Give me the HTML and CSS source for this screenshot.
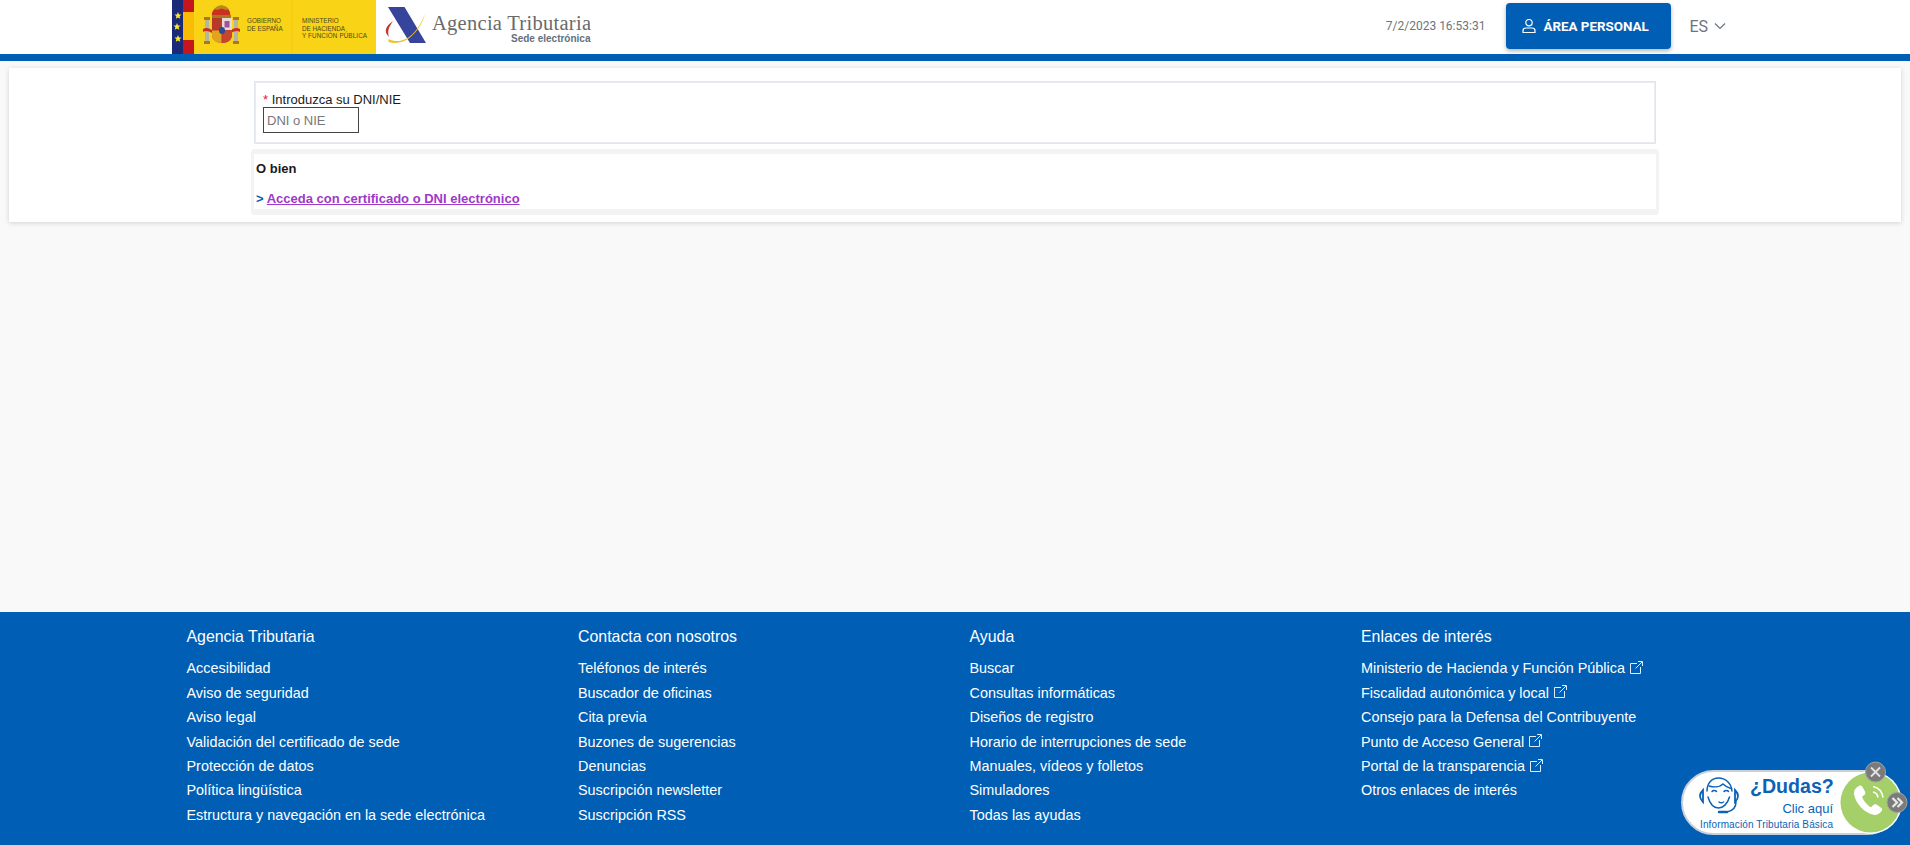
FILE: index.html
```html
<!DOCTYPE html>
<html lang="es">
<head>
<meta charset="utf-8">
<title>Agencia Tributaria: Sede electrónica</title>
<link rel="stylesheet" href="styles.css">
</head>
<body>
<header class="site-header">
  <svg class="logo-gov" viewBox="172 0 204 54" width="204" height="54" role="img" aria-label="Gobierno de España">
    <rect x="172" y="0" width="204" height="54" fill="#f8d316"/>
    <rect x="172" y="0" width="11" height="54" fill="#1a2a78"/>
    <rect x="183" y="0" width="11" height="54" fill="#c4161c"/>
    <rect x="183" y="12" width="11" height="28" fill="#fbbc04"/>
    <rect x="291.500" y="0" width="1" height="54" fill="#f3c912"/>
    <g fill="#fde92c">
      <path d="M178 12l1 2.400 2.500.2-1.900 1.600.6 2.500-2.200-1.300-2.200 1.300.6-2.500-1.900-1.600 2.500-.2z"/>
      <path d="M177 23l1 2.400 2.500.2-1.900 1.600.6 2.500-2.200-1.300-2.200 1.300.6-2.500-1.900-1.600 2.500-.2z"/>
      <path d="M178 35l1 2.400 2.500.2-1.900 1.600.6 2.500-2.200-1.300-2.200 1.300.6-2.500-1.900-1.600 2.500-.2z"/>
    </g>
    <g>
      <path d="M212 16c-1-5 3-9 9.500-9.500C228 7 231 11 230 16z" fill="#c9301f"/>
      <path d="M214 9l3-2.500 4.500-1.500 4.500 1.500 3 2.500-3 1-4.500-1.500-4.500 1.500z" fill="#b9891a"/>
      <rect x="212" y="15" width="19" height="3" fill="#a9781a"/>
      <rect x="204" y="17" width="6" height="3" fill="#a9781a"/>
      <rect x="233" y="17" width="6" height="3" fill="#a9781a"/>
      <rect x="205" y="20" width="4" height="21" fill="#b5b5a5"/>
      <rect x="234" y="20" width="4" height="21" fill="#b5b5a5"/>
      <rect x="204" y="41" width="6" height="3" fill="#a9781a"/>
      <rect x="233" y="41" width="6" height="3" fill="#a9781a"/>
      <path d="M203 29c3-2 6-1 9 1v3c-3-1.500-6-3-9-1zM240 29c-3-2-6-1-9 1v3c3-1.500 6-3 9-1z" fill="#c9301f"/>
      <path d="M212 18h20v17c0 5-5 8-10 8s-10-3-10-8z" fill="#b8392a"/>
      <rect x="222" y="18" width="10" height="12" fill="#e6d9d8"/>
      <path d="M224.500 21h5v6.500h-5z" fill="#a0529a"/>
      <path d="M212 30.500h9.500V43c-5 0-9.500-3-9.500-8z" fill="#e0a420"/>
      <path d="M222.500 30.500h9.500v4.500c0 5-4.500 8-9.500 8z" fill="#c8452c"/>
      <ellipse cx="222" cy="30.500" rx="3" ry="3.500" fill="#2b4b92"/>
    </g>
    <g class="gov-text">
      <text x="247" y="23">GOBIERNO</text>
      <text x="247" y="30.500">DE ESPAÑA</text>
      <text x="302" y="23">MINISTERIO</text>
      <text x="302" y="30.500">DE HACIENDA</text>
      <text x="302" y="38" textLength="65">Y FUNCIÓN PÚBLICA</text>
    </g>
  </svg>
  <svg class="logo-at" viewBox="380 0 220 54" width="220" height="54" role="img" aria-label="Agencia Tributaria">
    <path d="M388 7h16.500L426 43h-16z" fill="#36449b"/>
    <path d="M388.500 39c11 5.500 26 1 36.500-25-5 18-20 33-36.500 28z" fill="#f0bf2e"/>
    <path d="M393 21c-7 5-10 10-4 16-2-6 0-10 4-16z" fill="#c5352b"/>
    <text class="at-title" x="432" y="29.500" textLength="159">Agencia Tributaria</text>
    <text class="at-sub" x="511" y="42">Sede electrónica</text>
  </svg>
  <div class="header-right">
    <span class="clock">7/2/2023 16:53:31</span>
    <a class="btn-personal" href="#">
      <svg class="btn-icon" viewBox="0 0 16 16" width="16" height="16" fill="none" stroke="#fff" stroke-width="1.200">
        <circle cx="8" cy="4.700" r="3.200"/>
        <path d="M2 14.500v-1.800c0-1.800 1.500-2.700 3-2.700h6c1.500 0 3 .9 3 2.700v1.800z"/>
      </svg>
      <span>ÁREA PERSONAL</span>
    </a>
    <a class="lang" href="#">
      <span>ES</span>
      <svg viewBox="0 0 12 8" width="12" height="8" fill="none" stroke="#6c757d" stroke-width="1.200"><path d="M1 1.500l5 5 5-5"/></svg>
    </a>
  </div>
</header>

<main class="site-main">
  <section class="card">
    <div class="field-box">
      <label class="field-label" for="dni"><span class="req">*</span> Introduzca su DNI/NIE</label>
      <input class="field-input" id="dni" type="text" placeholder="DNI o NIE">
    </div>
    <div class="alt-box">
      <div class="alt-inner">
        <p class="alt-title">O bien</p>
        <p class="alt-link"><span class="alt-mark">&gt;</span> <a href="#">Acceda con certificado o DNI electrónico</a></p>
      </div>
    </div>
  </section>
</main>

<footer class="site-footer">
  <div class="footer-grid">
    <nav class="footer-col">
      <h2>Agencia Tributaria</h2>
      <ul>
        <li><a href="#">Accesibilidad</a></li>
        <li><a href="#">Aviso de seguridad</a></li>
        <li><a href="#">Aviso legal</a></li>
        <li><a href="#">Validación del certificado de sede</a></li>
        <li><a href="#">Protección de datos</a></li>
        <li><a href="#">Política lingüística</a></li>
        <li><a href="#">Estructura y navegación en la sede electrónica</a></li>
      </ul>
    </nav>
    <nav class="footer-col">
      <h2>Contacta con nosotros</h2>
      <ul>
        <li><a href="#">Teléfonos de interés</a></li>
        <li><a href="#">Buscador de oficinas</a></li>
        <li><a href="#">Cita previa</a></li>
        <li><a href="#">Buzones de sugerencias</a></li>
        <li><a href="#">Denuncias</a></li>
        <li><a href="#">Suscripción newsletter</a></li>
        <li><a href="#">Suscripción RSS</a></li>
      </ul>
    </nav>
    <nav class="footer-col">
      <h2>Ayuda</h2>
      <ul>
        <li><a href="#">Buscar</a></li>
        <li><a href="#">Consultas informáticas</a></li>
        <li><a href="#">Diseños de registro</a></li>
        <li><a href="#">Horario de interrupciones de sede</a></li>
        <li><a href="#">Manuales, vídeos y folletos</a></li>
        <li><a href="#">Simuladores</a></li>
        <li><a href="#">Todas las ayudas</a></li>
      </ul>
    </nav>
    <nav class="footer-col">
      <h2>Enlaces de interés</h2>
      <ul>
        <li><a class="ext" href="#">Ministerio de Hacienda y Función Pública <svg class="ext-icon" viewBox="0 0 13 13" width="13" height="13"><path d="M7 2.500H.5v10h10V6M5.500 7.500L12 1M8 .5h4.500V5"/></svg></a></li>
        <li><a class="ext" href="#">Fiscalidad autonómica y local <svg class="ext-icon" viewBox="0 0 13 13" width="13" height="13"><path d="M7 2.500H.5v10h10V6M5.500 7.500L12 1M8 .5h4.500V5"/></svg></a></li>
        <li><a href="#">Consejo para la Defensa del Contribuyente</a></li>
        <li><a class="ext" href="#">Punto de Acceso General <svg class="ext-icon" viewBox="0 0 13 13" width="13" height="13"><path d="M7 2.500H.5v10h10V6M5.500 7.500L12 1M8 .5h4.500V5"/></svg></a></li>
        <li><a class="ext" href="#">Portal de la transparencia <svg class="ext-icon" viewBox="0 0 13 13" width="13" height="13"><path d="M7 2.500H.5v10h10V6M5.500 7.500L12 1M8 .5h4.500V5"/></svg></a></li>
        <li><a href="#">Otros enlaces de interés</a></li>
      </ul>
    </nav>
  </div>
</footer>

<svg class="help-widget" viewBox="1670 755 240 90" width="240" height="90" role="img" aria-label="Información Tributaria Básica">
  <rect x="1682" y="771" width="216" height="63" rx="31.500" fill="#fff" stroke="#c9d0da" stroke-width="2"/>
  <g fill="none" stroke="#0b62b6" stroke-width="1.500" stroke-linecap="round">
    <path d="M1707 791c0-8 5-13 11.500-13s13 5 13.500 13"/>
    <path d="M1708 797c2 7 6 11 10.500 11s9-4 11-11"/>
    <path d="M1709 786c5 1.500 11 1 14-2 2 2 4.500 3.500 8 4.500"/>
    <path d="M1712 791.500c1-1.500 3.500-1.500 4.500 0M1724 791.500c1-1.500 3.500-1.500 4.500 0"/>
    <path d="M1719 802c1.500 1 3 1 4.500 0"/>
    <path d="M1703 790c-2 2-3 4-3 6s1 4 3 6zM1735 790c2 2 3 4 3 6s-1 4-3 6z" stroke-width="1.800"/>
    <path d="M1736 802c0 6-4 9-9 10"/>
    <path d="M1719 812h8" stroke-width="2.500"/>
  </g>
  <text class="w-title" x="1750" y="793">¿Dudas?</text>
  <text class="w-click" x="1833" y="813">Clic aquí</text>
  <text class="w-info" x="1700" y="828" textLength="133">Información Tributaria Básica</text>
  <circle cx="1870.500" cy="802.500" r="31.500" fill="#fff"/>
  <circle cx="1870.500" cy="802.500" r="30" fill="#a5cf68"/>
  <path d="M1858 786.500c2-1.500 3.500-1 4.500.5l2.500 4.500c.7 1.500.3 2.800-1 3.800l-2 1.500c1.500 4 5 8.500 9 10.500l2-2c1-1.200 2.500-1.400 4-.5l4 3c1.500 1 1.500 2.500.3 3.800-2.500 3-5.500 4-9 3-9-2.500-16-11-18-19-1-4 .5-7 3.700-9.100z" fill="#fff"/>
  <g fill="none" stroke="#fff" stroke-width="1.600"><path d="M1873 792c2.500.5 4.500 2.500 5 5.500M1873 786.500c5 1 9 5 10 11"/></g>
  <circle cx="1875.500" cy="772" r="10" fill="#7b7b7b" stroke="#a3a3a3"/>
  <path d="M1871 767.500l9 9M1880 767.500l-9 9" stroke="#e3e3e3" stroke-width="1.800" fill="none"/>
  <circle cx="1897" cy="802.500" r="10" fill="#7b7b7b" stroke="#a3a3a3"/>
  <path d="M1892.500 798l4.500 4.500-4.500 4.500M1897.500 798l4.500 4.500-4.500 4.500" stroke="#e8e8e8" stroke-width="2.200" fill="none"/>
</svg>
</body>
</html>
```

FILE: styles.css
```css
* { box-sizing: border-box; }
html, body { height: 100%; }
body {
  margin: 0;
  min-height: 845px;
  position: relative;
  overflow: hidden;
  display: flex;
  flex-direction: column;
  background: #f9f9f9;
  color: #212529;
  font-family: "Liberation Sans", Arial, sans-serif;
}
a { text-decoration: none; color: inherit; }

/* Header */
.site-header {
  flex: none;
  height: 61px;
  display: flex;
  align-items: flex-start;
  padding-left: 172px;
  background: #fff;
  border-bottom: 7px solid #005eb5;
}
.logo-gov { display: block; flex: none; }
.logo-at { display: block; flex: none; margin-left: 4px; }
.gov-text { font: 6.300px "Liberation Sans", Arial, sans-serif; fill: #4d4a1c; }
.at-title { font: 20.500px "Liberation Serif", "Times New Roman", serif; fill: #6a6a6a; }
.at-sub { font: bold 10px "Liberation Sans", Arial, sans-serif; fill: #66707c; }
.header-right {
  margin-left: auto;
  padding: 3px 184px 0 0;
  display: flex;
  align-items: flex-start;
}
.clock {
  font: 12px/46px Roboto, sans-serif;
  color: #6c757d;
  margin-right: 21px;
}
.btn-personal {
  width: 165px;
  height: 46px;
  display: flex;
  align-items: center;
  padding-left: 15px;
  gap: 6px;
  border-radius: 4px;
  background: #005eb5;
  color: #fff;
  font: 700 13.400px Roboto, sans-serif;
  box-shadow: 0 2px 4px rgba(0, 0, 0, .3);
}
.btn-icon { flex: none; }
.lang {
  display: flex;
  align-items: center;
  gap: 6px;
  height: 46px;
  margin-left: 18px;
  font: 16px Roboto, sans-serif;
  color: #6c757d;
}

/* Main */
.site-main { flex: 1; padding: 7px 9px 0; }
.card {
  background: #fff;
  height: 154px;
  padding: 13px 242px 0;
  box-shadow: 0 1px 5px rgba(0, 0, 0, .16);
}
.field-box {
  margin: 0 3px;
  height: 63px;
  padding: 10px 8px 0;
  border: 1px solid #e1e6ed;
  box-shadow: inset 0 0 0 1px #e8ecf1;
  font-size: 13px;
}
.field-label { display: block; color: #1a1a1a; line-height: 15px; }
.req { color: #e0202a; }
.field-input {
  display: block;
  width: 96px;
  height: 26px;
  padding: 0 3px;
  border: 1px solid #444;
  background: #fff;
  border-radius: 0;
  font: 13px "Liberation Sans", Arial, sans-serif;
}
.field-input::placeholder { color: #777; opacity: 1; }
.alt-box {
  margin-top: 5px;
  height: 66px;
  border-style: solid;
  border-color: #f3f3f3;
  border-width: 5px 3px 6px;
  border-radius: 4px;
  background: #fff;
}
.alt-inner { padding: 7px 2px 0; font-size: 13px; font-weight: 700; }
.alt-title { margin: 0 0 14px; color: #1a1a1a; line-height: 16px; }
.alt-link { margin: 0; line-height: 16px; }
.alt-mark { color: #0b5cb0; }
.alt-link a { color: #a038c8; text-decoration: underline; }

/* Footer */
.site-footer {
  flex: none;
  height: 233px;
  padding: 11px 0 0 170px;
  background: #005eb5;
  color: #fff;
}
.footer-grid {
  width: 1566px;
  display: grid;
  grid-template-columns: repeat(4, 1fr);
}
.footer-col { padding-left: 16.500px; }
.footer-col h2 {
  margin: 0 0 5.200px;
  font-size: 15.900px;
  font-weight: 400;
  line-height: 28px;
}
.footer-col ul { margin: 0; padding: 0; list-style: none; }
.footer-col li { font-size: 14.400px; line-height: 24.450px; }
.ext { display: inline-flex; align-items: center; white-space: pre; }
.ext-icon { fill: none; stroke: #e2ecf6; stroke-width: 1; margin: -2px 0 0 1px; }

/* Floating help widget */
.help-widget { position: absolute; right: 0; bottom: 0; display: block; }
.w-title { font: bold 19.600px "Liberation Sans", Arial, sans-serif; fill: #0b62b6; }
.w-click { font: 13px "Liberation Sans", Arial, sans-serif; fill: #0b62b6; text-anchor: end; }
.w-info { font: 10px "Liberation Sans", Arial, sans-serif; fill: #0b62b6; }
```
